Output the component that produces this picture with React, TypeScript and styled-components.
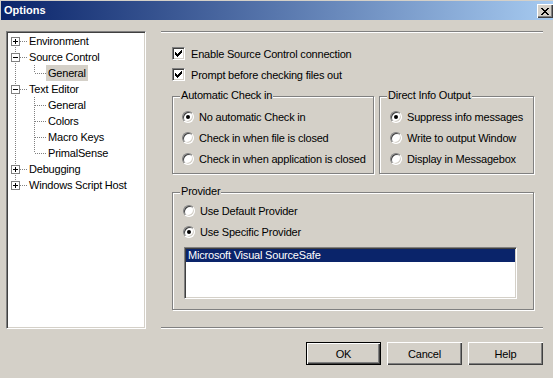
import React from 'react'
import styled, { createGlobalStyle } from 'styled-components'

const GlobalStyle = createGlobalStyle`
body {
  margin: 0;
  background: #d4d0c8;
}
`

const Window = styled.div`
width: 553px;
height: 378px;
box-sizing: border-box;
padding-top: 1px;
background: #d4d0c8;
font-family: "Liberation Sans", Arial, sans-serif;
font-size: 11px;
letter-spacing: -0.2px;
color: #000;
overflow: hidden;
`
const TitleBar = styled.div`
height: 19px;
margin-left: 1px;
padding-left: 3px;
display: flex;
justify-content: space-between;
align-items: flex-start;
background: linear-gradient(to right, #0a246a, #a6caf0);
`
const TitleText = styled.span`
color: #fff;
font-weight: bold;
line-height: 19px;
letter-spacing: 0;
`
const CloseButton = styled.span`
width: 16px;
height: 14px;
margin-top: 3px;
box-sizing: border-box;
display: flex;
align-items: center;
justify-content: center;
background: #d4d0c8;
box-shadow: inset 1px 1px #fff, inset -1px -1px #404040, inset -2px -2px #808080;
`
const Body = styled.div`
display: flex;
align-items: flex-start;
padding: 11px 0 0 6px;
`
const Sunken = styled.div`
box-sizing: border-box;
border: 1px solid;
border-color: #808080 #fff #fff #808080;
box-shadow: inset 1px 1px #404040, inset -1px -1px #d4d0c8;
padding: 1px;
background: #fff;
`
const TreeBox = styled(Sunken)`
width: 140px;
height: 298px;
`
const TreeRow = styled.div`
display: flex;
align-items: center;
height: 16px;
`
const TreeLabel = styled.span<{ $selected?: boolean }>`
padding: 0 2px;
line-height: 16px;
white-space: nowrap;
background: ${p => (p.$selected ? '#d4d0c8' : 'transparent')};
`
const RightColumn = styled.div`
width: 382px;
margin-left: 15px;
display: flex;
flex-direction: column;
`
const Separator = styled.div<{ $top?: number }>`
height: 0;
margin-top: ${p => p.$top || 0}px;
border-top: 1px solid #808080;
border-bottom: 1px solid #fff;
`
const CheckList = styled.div`
margin-top: 10px;
padding-left: 11px;
`
const OptionRow = styled.label<{ $gap: number }>`
display: flex;
align-items: center;
gap: ${p => p.$gap}px;
height: 21px;
white-space: nowrap;
`
const CheckBox = styled.span`
width: 13px;
height: 13px;
box-sizing: border-box;
flex: none;
border: 1px solid;
border-color: #808080 #fff #fff #808080;
box-shadow: inset 1px 1px #404040, inset -1px -1px #d4d0c8;
background: #fff;
display: flex;
`
const Radio = styled.span<{ $on?: boolean }>`
position: relative;
width: 12px;
height: 12px;
box-sizing: border-box;
flex: none;
border-radius: 50%;
border: 1px solid;
border-color: #808080 #fff #fff #808080;
box-shadow: inset 1px 1px #404040, inset -1px -1px #d4d0c8;
background: #fff;
&::after {
  content: '';
  display: ${p => (p.$on ? 'block' : 'none')};
  position: absolute;
  left: 3px;
  top: 3px;
  width: 4px;
  height: 4px;
  border-radius: 50%;
  background: #000;
}
`
const GroupRow = styled.div`
display: flex;
gap: 5px;
margin: 11px 0 0 11px;
`
const Group = styled.div<{ $w: number; $h: number; $pad: string }>`
position: relative;
box-sizing: border-box;
width: ${p => p.$w}px;
height: ${p => p.$h}px;
padding: ${p => p.$pad};
border: 1px solid #808080;
box-shadow: 1px 1px 0 #fff, inset 1px 1px 0 #fff;
`
const GroupTitle = styled.span`
position: absolute;
top: -8px;
left: 7px;
padding: 0 1px;
line-height: 13px;
background: #d4d0c8;
white-space: nowrap;
`
const ProviderGroup = styled(Group)`
margin: 18px 0 0 11px;
`
const ListBox = styled(Sunken)`
width: 333px;
height: 52px;
margin: 5px 0 0 1px;
`
const ListItem = styled.div<{ $selected?: boolean }>`
height: 13px;
line-height: 13px;
padding-left: 2px;
color: ${p => (p.$selected ? '#fff' : '#000')};
background: ${p => (p.$selected ? '#0a246a' : 'transparent')};
`
const ButtonBar = styled.div`
display: flex;
justify-content: flex-end;
gap: 6px;
margin-top: 13px;
padding-right: 10px;
`
const Button = styled.button<{ $isDefault?: boolean }>`
width: 75px;
height: 23px;
margin: 0;
padding: 0;
box-sizing: border-box;
background: #d4d0c8;
color: #000;
font: inherit;
letter-spacing: inherit;
border: ${p => (p.$isDefault ? '1px solid #000' : 'none')};
box-shadow: inset 1px 1px #fff, inset -1px -1px #404040, inset -2px -2px #808080;
`

type TreeNode = {
  label: string
  level: 0 | 1
  expander?: 'plus' | 'minus'
  first?: boolean
  last?: boolean
  lastChild?: boolean
  selected?: boolean
}

const treeNodes: TreeNode[] = [
  { label: 'Environment', level: 0, expander: 'plus', first: true },
  { label: 'Source Control', level: 0, expander: 'minus' },
  { label: 'General', level: 1, lastChild: true, selected: true },
  { label: 'Text Editor', level: 0, expander: 'minus' },
  { label: 'General', level: 1 },
  { label: 'Colors', level: 1 },
  { label: 'Macro Keys', level: 1 },
  { label: 'PrimalSense', level: 1, lastChild: true },
  { label: 'Debugging', level: 0, expander: 'plus' },
  { label: 'Windows Script Host', level: 0, expander: 'plus', last: true },
]

// one 19x16 cell of the tree's dotted connector lines
const Gutter = ({ up, down, across, expander }: {
  up: boolean
  down: boolean
  across: boolean
  expander?: 'plus' | 'minus'
}) => (
  <svg width="19" height="16" viewBox="0 0 19 16" shapeRendering="crispEdges" style={{ flex: 'none' }}>
    <g stroke="#808080" strokeDasharray="1 1">
      {up && <line x1="7.5" y1="0" x2="7.5" y2="8" />}
      {down && <line x1="7.5" y1="8" x2="7.5" y2="16" />}
      {across && <line x1="8" y1="8.5" x2="19" y2="8.5" />}
    </g>
    {expander && (
      <g>
        <rect x="3.5" y="4.5" width="8" height="8" fill="#fff" stroke="#808080" />
        <line x1="5" y1="8.5" x2="10" y2="8.5" stroke="#000" />
        {expander === 'plus' && <line x1="7.5" y1="6" x2="7.5" y2="11" stroke="#000" />}
      </g>
    )}
  </svg>
)

const CheckMark = () => (
  <svg width="11" height="11" viewBox="0 0 11 11" shapeRendering="crispEdges">
    <path
      fill="#000"
      d="M2 4h1v3h-1z M3 5h1v3h-1z M4 6h1v3h-1z M5 5h1v3h-1z M6 4h1v3h-1z M7 3h1v3h-1z M8 2h1v3h-1z"
    />
  </svg>
)

const CloseGlyph = () => (
  <svg width="8" height="7" viewBox="0 0 8 7" shapeRendering="crispEdges">
    <path
      fill="#000"
      d="M0 0h2v1h-2z M6 0h2v1h-2z M1 1h2v1h-2z M5 1h2v1h-2z M2 2h4v1h-4z M3 3h2v1h-2z M2 4h4v1h-4z M1 5h2v1h-2z M5 5h2v1h-2z M0 6h2v1h-2z M6 6h2v1h-2z"
    />
  </svg>
)

const Tree = () => (
  <TreeBox>
    {treeNodes.map((n, i) =>
      n.level === 0 ? (
        <TreeRow key={i}>
          <Gutter up={!n.first} down={!n.last} across expander={n.expander} />
          <TreeLabel $selected={n.selected}>{n.label}</TreeLabel>
        </TreeRow>
      ) : (
        <TreeRow key={i}>
          <Gutter up down across={false} />
          <Gutter up down={!n.lastChild} across />
          <TreeLabel $selected={n.selected}>{n.label}</TreeLabel>
        </TreeRow>
      )
    )}
  </TreeBox>
)

const RadioOption = ({ on, text }: { on?: boolean; text: string }) => (
  <OptionRow $gap={5}>
    <Radio $on={on} />
    {text}
  </OptionRow>
)

const App = () => {
  return (
    <Window>
      <GlobalStyle />
      <TitleBar>
        <TitleText>Options</TitleText>
        <CloseButton>
          <CloseGlyph />
        </CloseButton>
      </TitleBar>
      <Body>
        <Tree />
        <RightColumn>
          <Separator />
          <CheckList>
            <OptionRow $gap={6}>
              <CheckBox><CheckMark /></CheckBox>
              Enable Source Control connection
            </OptionRow>
            <OptionRow $gap={6}>
              <CheckBox><CheckMark /></CheckBox>
              Prompt before checking files out
            </OptionRow>
          </CheckList>
          <GroupRow>
            <Group $w={202} $h={78} $pad="9px 0 0 9px">
              <GroupTitle>Automatic Check in</GroupTitle>
              <RadioOption on text="No automatic Check in" />
              <RadioOption text="Check in when file is closed" />
              <RadioOption text="Check in when application is closed" />
            </Group>
            <Group $w={155} $h={78} $pad="9px 0 0 10px">
              <GroupTitle>Direct Info Output</GroupTitle>
              <RadioOption on text="Suppress info messages" />
              <RadioOption text="Write to output Window" />
              <RadioOption text="Display in Messagebox" />
            </Group>
          </GroupRow>
          <ProviderGroup $w={362} $h={118} $pad="7px 0 0 10px">
            <GroupTitle>Provider</GroupTitle>
            <RadioOption text="Use Default Provider" />
            <RadioOption on text="Use Specific Provider" />
            <ListBox>
              <ListItem $selected>Microsoft Visual SourceSafe</ListItem>
            </ListBox>
          </ProviderGroup>
          <Separator $top={17} />
        </RightColumn>
      </Body>
      <ButtonBar>
        <Button $isDefault>OK</Button>
        <Button>Cancel</Button>
        <Button>Help</Button>
      </ButtonBar>
    </Window>
  )
}

export default App
